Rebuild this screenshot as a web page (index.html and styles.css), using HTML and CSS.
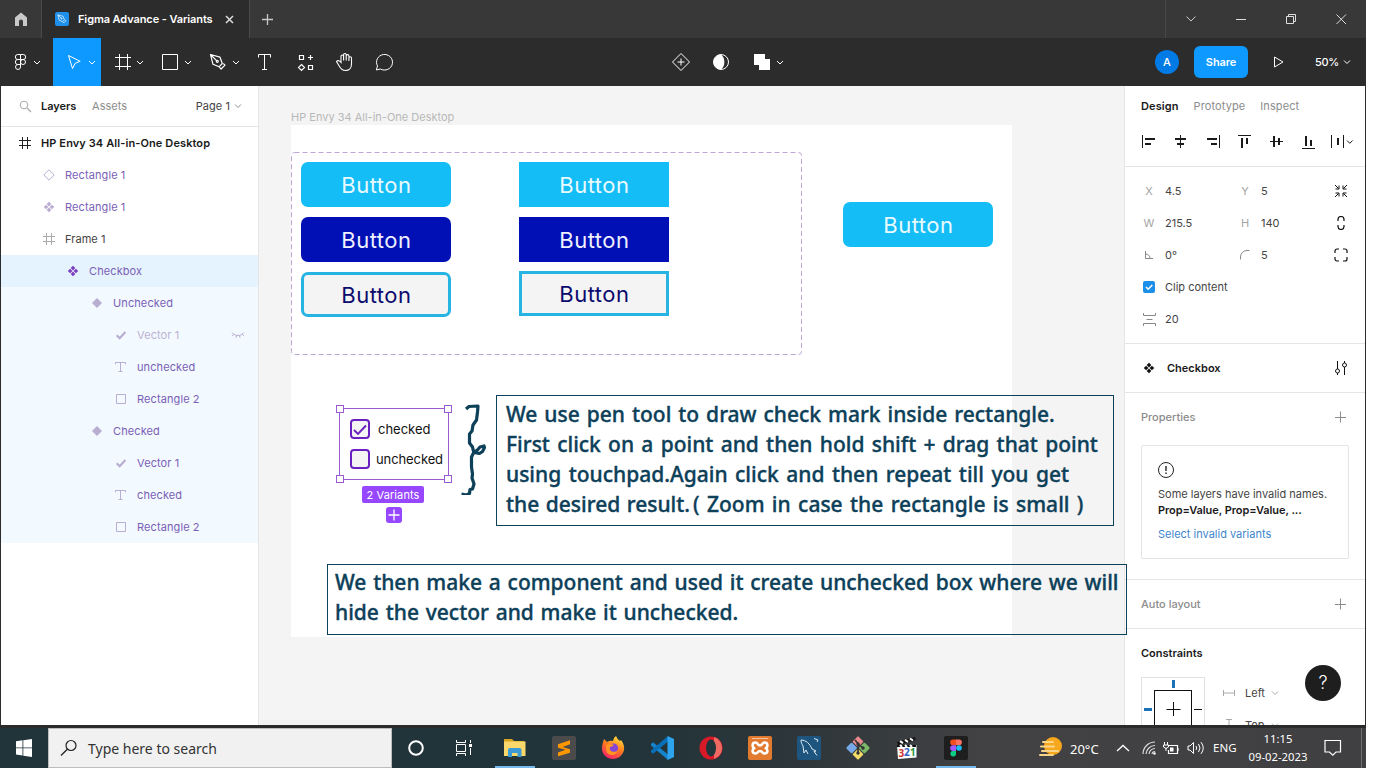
FILE: index.html
```html
<!DOCTYPE html>
<html lang="en">
<head>
<meta charset="utf-8">
<title>Figma Advance - Variants</title>
<link rel="stylesheet" href="styles.css">
</head>
<body>
<svg class="defs" width="0" height="0">
  <defs>
    <symbol id="caret" viewBox="0 0 8 8"><path d="M1 2.5l3 3 3-3" fill="none" stroke="currentColor"/></symbol>
    <symbol id="frame" viewBox="0 0 12 12"><path d="M3.5 0v12M8.500 0v12M0 3.500h12M0 8.500h12" fill="none" stroke="currentColor"/></symbol>
    <symbol id="compset" viewBox="0 0 12 12"><path d="M6 .8l2.300 2.300L6 5.400 3.700 3.100zM6 6.600l2.300 2.300L6 11.200 3.700 8.900zM3.100 3.700L5.400 6 3.100 8.300.8 6zM8.900 3.700L11.200 6 8.900 8.300 6.600 6z" fill="currentColor"/></symbol>
    <symbol id="diamond" viewBox="0 0 12 12"><path d="M6 1l5 5-5 5-5-5z" fill="currentColor"/></symbol>
    <symbol id="diamondo" viewBox="0 0 12 12"><path d="M6 .8L11.200 6 6 11.200.8 6z" fill="none" stroke="currentColor"/></symbol>
    <symbol id="check" viewBox="0 0 12 12"><path d="M1.700 6.200l3 3 5.700-6.200" fill="none" stroke="currentColor" stroke-width="2.200"/></symbol>
    <symbol id="text" viewBox="0 0 12 12"><path d="M.5 3.300V1.500h10v1.800M5.500 1.500v9M3.500 10.500h4" fill="none" stroke="currentColor"/></symbol>
    <symbol id="rect" viewBox="0 0 12 12"><path d="M1.500 1.500h9v9h-9z" fill="none" stroke="currentColor"/></symbol>
    <symbol id="plus" viewBox="0 0 12 12"><path d="M5.500 .5v11M0 6.500h11" fill="none" stroke="currentColor"/></symbol>
    <symbol id="nib" viewBox="0 0 18 18"><g fill="none" stroke="currentColor" stroke-width="1.200" stroke-linejoin="round"><path d="M1.500 1.500l9.500 2.700 2.300 6.300-3.300 3.300-6-2.500zM1.500 1.500l6.300 6.300M10.500 14.300l1.600 1.700 3.900-3.900-1.700-1.600"/><circle cx="8.300" cy="8.300" r="1"/></g></symbol>
  </defs>
</svg>

<div class="window">
  <header class="tabbar">
    <div class="home"><svg width="14" height="14"><path d="M7 .5l6 5V14H9V9.500a2 2 0 0 0-4 0V14H1V5.500z" fill="#c9c9c9"/></svg></div>
    <div class="tab">
      <span class="tab-icon"><svg width="10" height="10"><use href="#nib"/></svg></span>
      <span class="tab-title">Figma Advance - Variants</span>
      <svg class="tab-close" width="9" height="9"><path d="M1 1l7 7M8 1L1 8" stroke="#ddd" stroke-width="1.500"/></svg>
    </div>
    <div class="newtab"><svg width="11" height="11"><path d="M5.500 0v11M0 5.500h11" stroke="#c8c8c8" stroke-width="1.300"/></svg></div>
    <div class="winctl">
      <svg width="50" height="38"><path d="M20.500 16.500l4.500 4.500 4.500-4.500" fill="none" stroke="#ccc"/></svg>
      <svg width="50" height="38"><path d="M20 19.500h10" stroke="#ddd"/></svg>
      <svg width="50" height="38"><path d="M20.500 16.500h7v7h-7zM22.500 16v-1.500h7v7h-1.500" fill="none" stroke="#ddd"/></svg>
      <svg width="50" height="38"><path d="M20.500 14.500l9.500 9.500M30 14.500L20.500 24" stroke="#ddd"/></svg>
    </div>
  </header>

  <div class="toolbar">
    <svg class="menu" width="53" height="48"><g fill="none" stroke="#fff"><path d="M20.500 16.500h-2.700a2.500 2.500 0 0 0 0 5h2.700zM20.500 16.500h2.700a2.500 2.500 0 0 1 0 5h-2.700M20.500 21.500h-2.700a2.500 2.500 0 0 0 0 5h2.700zM20.500 26.500h-2.700a2.500 2.500 0 1 0 2.700 2.500z"/><circle cx="23" cy="24" r="2.500"/><path d="M34 23l3 3 3-3"/></g></svg>
    <svg class="active" width="48" height="48"><g fill="none" stroke="#fff"><path d="M15.500 17.500l4 13 2.700-5.200 5-2z" stroke-linejoin="round"/><path d="M36 23l3 3 3-3"/></g></svg>
    <svg width="48" height="48"><g fill="none" stroke="#fff"><path d="M18.500 16v16M26.500 16v16M14 19.500h16M14 28.500h16"/><path d="M36 23l3 3 3-3"/></g></svg>
    <svg width="48" height="48"><g fill="none" stroke="#fff"><path d="M13.500 16.500h15v15h-15z"/><path d="M36 23l3 3 3-3"/></g></svg>
    <svg width="48" height="48"><use href="#nib" x="12" y="15" width="18" height="18" color="#fff"/><path d="M36 23l3 3 3-3" fill="none" stroke="#fff"/></svg>
    <svg width="40" height="48"><path d="M13.500 19.500v-3h12v3M19.500 16.500v15M17 31.500h5" fill="none" stroke="#fff"/></svg>
    <svg width="40" height="48"><path d="M14.500 17.500h4v4h-4zM23.500 27.500h4v4h-4zM25.500 17v5M23 19.500h5M16.500 26.500l3 3-3 3-3-3z" fill="none" stroke="#fff" stroke-width="1.200"/></svg>
    <svg width="40" height="48"><path d="M16.500 25.500v-6.200a1.300 1.300 0 0 1 2.600 0v4.200-5.700a1.300 1.300 0 0 1 2.600 0v5.700-4.500a1.300 1.300 0 0 1 2.700 0v5-3a1.300 1.300 0 0 1 2.600 0v6c0 4-2.500 6.500-6 6.500-3 0-4.600-1.500-6-4l-3-5c1.500-1.800 3.100-.7 4.500 1z" transform="translate(-.5 -1)" fill="none" stroke="#fff" stroke-width="1.100"/></svg>
    <svg width="40" height="48"><path d="M11 31.500l1.200-4a8 7.800 0 1 1 3 3z" transform="translate(.3 .5)" fill="none" stroke="#fff" stroke-linejoin="round"/></svg>
    <div class="mid">
      <svg width="40" height="48"><path d="M20 15.500l8.500 8.500-8.500 8.500-8.500-8.500zM20 20.500v7M16.500 24h7" fill="none" stroke="#fff"/></svg>
      <svg width="40" height="48"><circle cx="20" cy="24" r="7.500" fill="none" stroke="#fff"/><path d="M20 16.500a7.500 7.500 0 0 0 0 15c4.500-3 4.500-12 0-15z" fill="#fff"/></svg>
      <svg width="48" height="48"><path d="M13 16h11v5h5v11H18v-5h-5z" fill="#fff"/><path d="M36 23l3 3 3-3" fill="none" stroke="#fff"/></svg>
    </div>
    <div class="avatar">A</div>
    <div class="share">Share</div>
    <svg class="play" width="12" height="12"><path d="M1.500 1v10L10 6z" fill="none" stroke="#fff" stroke-linejoin="round"/></svg>
    <span class="zoom">50%</span>
    <svg class="zoomcaret" width="8" height="8"><use href="#caret"/></svg>
  </div>

  <main class="work">
    <aside class="left">
      <div class="left-head">
        <svg width="13" height="13"><circle cx="5" cy="5" r="3.800" fill="none" stroke="#aaa"/><path d="M8 8l4 4" stroke="#aaa" stroke-width="1.200"/></svg>
        <b>Layers</b><span class="grey">Assets</span>
        <span class="page">Page 1</span><svg class="grey" width="8" height="8"><use href="#caret"/></svg>
      </div>
      <div class="layers">
        <div class="row d0 top"><svg><use href="#frame"/></svg>HP Envy 34 All-in-One Desktop</div>
        <div class="row d1 comp"><svg><use href="#diamondo"/></svg>Rectangle 1</div>
        <div class="row d1 comp"><svg><use href="#compset"/></svg>Rectangle 1</div>
        <div class="row d1 plain"><svg><use href="#frame"/></svg>Frame 1</div>
        <div class="row d2 comp sel"><svg><use href="#compset"/></svg>Checkbox</div>
        <div class="row d3 comp in"><svg><use href="#diamond"/></svg>Unchecked</div>
        <div class="row d4 comp in faded"><svg><use href="#check"/></svg>Vector 1<svg class="eye" viewBox="0 0 14 8"><path d="M1 1.500c3 4 9 4 12 0M2.800 3.200L1 5M11.200 3.200L13 5M5.500 4.500L5 6.800M8.500 4.500l.5 2.300" fill="none" stroke="currentColor"/></svg></div>
        <div class="row d4 comp in"><svg><use href="#text"/></svg>unchecked</div>
        <div class="row d4 comp in"><svg><use href="#rect"/></svg>Rectangle 2</div>
        <div class="row d3 comp in"><svg><use href="#diamond"/></svg>Checked</div>
        <div class="row d4 comp in"><svg><use href="#check"/></svg>Vector 1</div>
        <div class="row d4 comp in"><svg><use href="#text"/></svg>checked</div>
        <div class="row d4 comp in"><svg><use href="#rect"/></svg>Rectangle 2</div>
      </div>
    </aside>

    <section class="canvas">
      <div class="frame-label">HP Envy 34 All-in-One Desktop</div>
      <div class="artboard"></div>
      <svg class="dash" width="511" height="203"><rect x=".5" y=".5" width="510" height="202" rx="3" fill="none" stroke="#bda6d6" stroke-dasharray="5 3"/></svg>
      <div class="btn cyan round b1">Button</div>
      <div class="btn navy round b2">Button</div>
      <div class="btn line round b3">Button</div>
      <div class="btn cyan b4">Button</div>
      <div class="btn navy b5">Button</div>
      <div class="btn line b6">Button</div>
      <div class="btn cyan round b7">Button</div>

      <div class="selection">
        <i class="h tl"></i><i class="h tr"></i><i class="h bl"></i><i class="h br"></i>
        <div class="opt"><svg width="20" height="20"><rect x="1" y="1" width="18" height="18" rx="3" fill="#f4f4f4" stroke="#6a1fc0" stroke-width="2"/><path d="M4 11l4 4 8-8.500" fill="none" stroke="#6a1fc0" stroke-width="1.900"/></svg><span class="lbl-c">checked</span></div>
        <div class="opt"><svg width="20" height="20"><rect x="1" y="1" width="18" height="18" rx="3" fill="#f4f4f4" stroke="#6a1fc0" stroke-width="2"/></svg><span class="lbl-u">unchecked</span></div>
      </div>
      <div class="variants">2 Variants</div>
      <div class="addvar"><svg width="16" height="16"><path d="M8 2.500v11M2.500 8h11" stroke="#fff" stroke-width="1.300"/></svg></div>
      <svg class="brace" width="30" height="92"><path d="M8 6l3-2.500 9-.5-.5 6-1 8-3.500 5-1 6-2.500 3v9l3 4 1 4.500 3 1.500 3 .5 3-2 2-4-.5-1.500-4 1-3 3.500-3 1.500-2.500 5v10l1 7-.5 4 2 6-1.500 5-2.500.5-.5 4-3 1.500-5-.8" fill="none" stroke="#0d4059" stroke-width="3.200" stroke-linejoin="round"/></svg>
    </section>

    <aside class="right">
      <div class="rtabs"><b>Design</b><span>Prototype</span><span>Inspect</span></div>
      <div class="aligns">
        <svg width="32" height="32"><path d="M9.500 9v13"/><path d="M12 13h10M12 18h6" stroke-width="2"/></svg>
        <svg width="32" height="32"><path d="M16.500 9v13"/><path d="M11 13h11M13 18h7" stroke-width="2"/></svg>
        <svg width="32" height="32"><path d="M23.500 9v13"/><path d="M11 13h10M15 18h6" stroke-width="2"/></svg>
        <svg width="32" height="32"><path d="M10 9.500h13"/><path d="M14 12v10M19 12v6" stroke-width="2"/></svg>
        <svg width="32" height="32"><path d="M10 15.500h13"/><path d="M14 10v11M19 12v7" stroke-width="2"/></svg>
        <svg width="32" height="32"><path d="M10 22.500h13"/><path d="M14 10v10M19 14v6" stroke-width="2"/></svg>
        <svg width="32" height="32"><path d="M6.500 9v13M18.500 9v13"/><path d="M13 12v7" stroke-width="2"/><path d="M22 14.500l2.800 2.800 2.800-2.800"/></svg>
      </div>
      <div class="props">
        <div class="prow"><i>X</i><span>4.5</span><i>Y</i><span>5</span><svg width="14" height="14"><path d="M1 1l3.500 3.500M1.500 5H5V1.500M13 1L9.500 4.500M12.500 5H9V1.500M1 13l3.500-3.500M1.500 9H5v3.500M13 13L9.500 9.500M12.500 9H9v3.500" stroke="#111" fill="none"/></svg></div>
        <div class="prow"><i>W</i><span>215.5</span><i>H</i><span>140</span><svg width="14" height="14"><path d="M4 5V3.500a3 3 0 0 1 6 0V5M4 9v1.500a3 3 0 0 0 6 0V9" fill="none" stroke="#111" stroke-width="1.200"/></svg></div>
        <div class="prow"><i><svg width="10" height="10"><path d="M1.500 1v7.500H9M1.500 4c3 0 4.500 2 4.500 4.500" fill="none" stroke="#888"/></svg></i><span>0°</span><i><svg width="10" height="10"><path d="M.5 9.500V7A6.500 6.500 0 0 1 7 .5h2.500" fill="none" stroke="#888"/></svg></i><span>5</span><svg width="14" height="14"><path d="M1 5V3a2 2 0 0 1 2-2h2M9 1h2a2 2 0 0 1 2 2v2M13 9v2a2 2 0 0 1-2 2H9M5 13H3a2 2 0 0 1-2-2V9" fill="none" stroke="#111" stroke-width="1.200"/></svg></div>
        <div class="prow"><i><svg width="12" height="12"><rect width="12" height="12" rx="2" fill="#1c8fe8"/><path d="M3 6l2.200 2.200L9.300 4" fill="none" stroke="#fff" stroke-width="1.500"/></svg></i><span class="wide">Clip content</span></div>
        <div class="prow"><i><svg width="13" height="13"><path d="M.5 0v2.500h12V0M.5 13v-2.500h12V13M3.500 6.500h6" fill="none" stroke="#888"/></svg></i><span>20</span></div>
      </div>
      <div class="sec component"><svg width="12" height="12"><use href="#compset"/></svg><b>Checkbox</b><svg width="14" height="16"><path d="M3.500 1v8M3.500 13v2M10.500 1v2M10.500 7v8" stroke="#111"/><circle cx="3.500" cy="11" r="2" fill="none" stroke="#111"/><circle cx="10.500" cy="5" r="2" fill="none" stroke="#111"/></svg></div>
      <div class="sec properties">
        <div class="sec-head">Properties<svg width="12" height="12"><use href="#plus"/></svg></div>
        <div class="card">
          <svg width="16" height="16"><circle cx="8" cy="8" r="7.500" fill="none" stroke="#222"/><path d="M8 4v5M8 10.500V12" stroke="#222" stroke-width="1.400"/></svg>
          <p>Some layers have invalid names.<br><b>Prop=Value, Prop=Value, ...</b></p>
          <a>Select invalid variants</a>
        </div>
      </div>
      <div class="sec auto"><div class="sec-head">Auto layout<svg width="12" height="12"><use href="#plus"/></svg></div></div>
      <div class="constraints">
        <b>Constraints</b>
        <div class="cbody">
          <svg width="64" height="60"><rect x=".5" y=".5" width="63" height="63" fill="none" stroke="#e2e2e2"/><rect x="13.500" y="13.500" width="37" height="37" fill="none" stroke="#111"/><path d="M32.500 25v14M25.500 32.500h14M53 32.500h8" stroke="#111"/><path d="M32.500 3v8M3 32.500h8" stroke="#1a73b9" stroke-width="3"/></svg>
          <div class="csel">
            <div><svg width="12" height="8"><path d="M.5 1v6M11.500 1v6M0 4h12" stroke="#aaa"/></svg>Left<svg width="8" height="8"><use href="#caret"/></svg></div>
            <div><svg width="12" height="12"><path d="M3 .5h6M6 0v12M3 11.500h6" stroke="#aaa"/></svg>Top<svg width="8" height="8"><use href="#caret"/></svg></div>
          </div>
        </div>
      </div>
      <div class="help">?</div>
    </aside>

    <div class="note n1">
      <div class="l1">We use pen tool to draw check mark inside rectangle.</div>
      <div class="l2">First click on a point and then hold shift + drag that point</div>
      <div class="l3">using touchpad.Again click and then repeat till you get</div>
      <div class="l4">the desired result.<span class="l5">( Zoom in case the rectangle is small )</span></div>
    </div>
    <div class="note n2">
      <div>We then make a component and used it create unchecked box where we will</div>
      <div>hide the vector and make it unchecked.</div>
    </div>
  </main>

  <footer class="taskbar">
    <svg class="start" width="48" height="40"><path d="M16 13.200l6.500-.9v7.200H16zM23.300 12.200L32 11v8.500h-8.700zM16 20.300h6.500v7.200l-6.500-.9zM23.300 20.300H32V29l-8.700-1.300z" fill="#fff"/></svg>
    <div class="search"><svg width="18" height="18"><circle cx="11" cy="6.500" r="5" fill="none" stroke="#222" stroke-width="1.200"/><path d="M7.300 10.200L1 16.500" stroke="#222" stroke-width="1.300"/></svg><span>Type here to search</span></div>
    <svg width="48" height="40"><circle cx="24" cy="20" r="6.800" fill="none" stroke="#fff" stroke-width="2"/></svg>
    <svg width="48" height="40"><path d="M16.500 12v2.500h9V12M16.500 28v-2.500h9V28M16.500 16.500h9v7h-9zM30.500 12v3M30.500 20v7" fill="none" stroke="#fff"/><rect x="29" y="16" width="3" height="3" fill="#fff"/></svg>
    <div class="apps">
      <div class="app open"><svg width="24" height="24"><path d="M1 3h8l2 2h10v4H1z" fill="#d9a520"/><path d="M1 5.500h21.500V20H1z" fill="#fbd86b"/><path d="M5 21v-7q0-2 2-2h9.500q2 0 2 2v7h-4v-4h-5.500v4z" fill="#3c9ad6"/></svg></div>
      <div class="app"><svg width="24" height="24"><rect width="24" height="24" rx="2" fill="#4b4b4b"/><path d="M6 8.300l12-4v4L10.500 11l7.500 2.300v3.400L6 20.300v-3.800l7.500-2.700L6 11.800z" fill="#ff9800"/></svg></div>
      <div class="app"><svg width="24" height="24"><defs><linearGradient id="fx" x1=".8" y1="0" x2=".3" y2="1"><stop offset="0" stop-color="#ffe93b"/><stop offset=".5" stop-color="#ff7a1f"/><stop offset="1" stop-color="#f5206e"/></linearGradient></defs><path d="M3 3l3 3q3-2 6-1 0-3 3-5 1 3 4 5l1-1c3 4 3.500 7 3 10-1 5-5.500 9-11 9C6 23 1 18.500 1 12.500 1 9 2 6 3 3z" fill="url(#fx)"/><circle cx="12.500" cy="12" r="4.600" fill="#8245d8"/><path d="M5 9q4-2 8 0-2 2-4 2-1 3 2 4.500 3 1 6-1-2 5-7 4.500-5-1-5-6z" fill="#ff9422"/></svg></div>
      <div class="app"><svg width="24" height="24"><path d="M1 8l2-1.700L18 18.500V24L1 9.500z" fill="#1584cc"/><path d="M1 16l2 1.700L18 5.500V0L1 14.500z" fill="#0870b8"/><path d="M17.500 0L24 3v18l-6.500 3z" fill="#2fa4ee"/></svg></div>
      <div class="app"><svg width="24" height="24"><ellipse cx="12" cy="12" rx="11.500" ry="11.500" fill="#d71928"/><path d="M15 1a11.500 11.500 0 0 1 0 22z" fill="#ef6a62"/><ellipse cx="12" cy="12" rx="5" ry="8.500" fill="#22353a"/></svg></div>
      <div class="app"><svg width="24" height="24"><rect width="24" height="24" rx="2" fill="#e27a30"/><path d="M4 2.500h16" stroke="#f6c49c"/><path d="M7.500 6.500c2.500 0 2 3 4.500 3s2-3 4.500-3c3.500 0 3.500 4 1.500 5.700 2 1.800 2 5.300-1.500 5.300-2.500 0-2-2.500-4.500-2.500s-2 2.500-4.500 2.500c-3.500 0-3.500-3.500-1.500-5.300-2-1.700-2-5.700 1.500-5.700z" fill="none" stroke="#fff" stroke-width="2.600"/></svg></div>
      <div class="app"><svg width="24" height="24"><rect width="24" height="24" rx="2" fill="#1d557f"/><path d="M4 4c5 0 9 4 11 9l4 2-2 .5 3 4M4 4c0 3 1 4 2 6l1 7 2-3 2 4M17 2.500l4 1.500-1 2" fill="none" stroke="#dceaf3" stroke-width="1"/></svg></div>
      <div class="app"><svg width="24" height="24"><g transform="rotate(45 12 12)"><rect x="3.500" y="3.500" width="8" height="8" rx="1" fill="#e88b8e"/><rect x="12.500" y="3.500" width="8" height="8" rx="1" fill="#7cb968"/><rect x="3.500" y="12.500" width="8" height="8" rx="1" fill="#76a9e6"/><rect x="12.500" y="12.500" width="8" height="8" rx="1" fill="#f4dc6a"/></g><path d="M9 4l3 3.500v10M12 8l5 4" fill="none" stroke="#333" stroke-width="1.600"/><circle cx="12" cy="8" r="1.700" fill="#333"/><circle cx="17" cy="12" r="1.700" fill="#333"/><circle cx="12" cy="17" r="1.700" fill="#333"/></svg></div>
      <div class="app"><svg width="24" height="24"><path d="M2 6L20 1l.8 3L3 9z" fill="#111"/><path d="M5 5.200l3 2M10 3.800l3 2M15 2.500l3 2" stroke="#fff" stroke-width="2"/><path d="M2 9h19.500v12.500L3 23z" fill="#fff"/><path d="M2 9h19v2H2z" fill="#111"/><path d="M5 9l2 2M10 9l2 2M15 9l2 2" stroke="#fff" stroke-width="2"/><g class="clap"><text x="3.500" y="20.500" fill="#d0322c">3</text><text x="9" y="20" fill="#2b62c4">2</text><text x="15" y="19.500" fill="#2b9440">1</text></g></svg></div>
      <div class="app open"><svg width="24" height="24"><rect width="24" height="24" rx="2" fill="#1e1e1e"/><path d="M12 3.500H9a2.800 2.800 0 0 0 0 5.700h3z" fill="#f24e1e"/><path d="M12 3.500h3a2.800 2.800 0 0 1 0 5.700h-3z" fill="#ff7262"/><path d="M12 9.200H9a2.800 2.800 0 0 0 0 5.700h3z" fill="#a259ff"/><circle cx="15" cy="12" r="2.800" fill="#1abcfe"/><path d="M12 14.900H9a2.800 2.800 0 1 0 3 2.800z" fill="#0acf83"/></svg></div>
    </div>
    <svg class="weather" width="26" height="24"><circle cx="15" cy="10" r="9" fill="#f7a71c"/><path d="M5 6h10M3 10.500h13M4 15h16M2 19h13" stroke="#f9d58a" stroke-width="2" stroke-linecap="round"/></svg>
    <span class="temp">20°C</span>
    <svg class="up" width="14" height="8"><path d="M1 7l6-5.500L13 7" fill="none" stroke="#fff" stroke-width="1.300"/></svg>
    <svg class="wifi" width="14" height="14"><path d="M1 13A12 12 0 0 1 13 1M4 13a9 9 0 0 1 9-8.500M7 13a6 6 0 0 1 6-5.500M10 13a3 3 0 0 1 3-2.500" fill="none" stroke="#ddd" stroke-width="1.200"/><circle cx="12.500" cy="12.500" r="1.200" fill="#fff"/></svg>
    <svg class="bat" width="17" height="13"><path d="M5 3.500h9.500v8h-9V8M15 6v3" fill="none" stroke="#fff" stroke-width="1.200"/><path d="M7 5.500h3.500v4H7z" fill="#fff"/><path d="M1.500 0v3M4.500 0v3M.5 3h5v2L3 6.500.5 5zM3 6v3" fill="none" stroke="#fff"/></svg>
    <svg class="vol" width="18" height="14"><path d="M1 5v4h2l3.500 3.500v-11L3 5zM9 5q1.500 2 0 4M11.500 3q3 4 0 8M14 1.200q4.500 5.800 0 11.600" fill="none" stroke="#fff"/></svg>
    <span class="lang">ENG</span>
    <div class="clock"><div>11:15</div><div class="date">09-02-2023</div></div>
    <svg class="notif" width="18" height="18"><path d="M1 1.500h15.500V13H12l-3.200 3.200L5.500 13H1z" fill="none" stroke="#fff" stroke-width="1.200"/></svg>
    <div class="peek"></div>
  </footer>
</div>
</body>
</html>
```
FILE: styles.css
```css
* { box-sizing: border-box; }
body { margin: 0; background: #fff; overflow: hidden; font: 11px/16px Inter, "Liberation Sans", sans-serif; color: #444; }
svg { display: block; flex: none; }
b { font-weight: 600; color: #1a1a1a; }
.defs { position: absolute; }
.window { width: 1366px; height: 768px; display: flex; flex-direction: column; background: #2c2c2c; }

.tabbar { height: 38px; display: flex; background: #383838; flex: none; }
.home { width: 42px; display: flex; align-items: center; justify-content: center; border-right: 1px solid #4a4a4a; }
.tab { width: 207px; display: flex; align-items: center; padding-left: 13px; background: #2c2c2c; }
.tab-icon { width: 14px; height: 14px; border-radius: 2px; background: #1e90ec; color: #fff; display: flex; align-items: center; justify-content: center; }
.tab-title { margin-left: 9px; width: 147px; color: #fff; font-weight: 600; font-size: 11px; letter-spacing: -.1px; white-space: nowrap; }
.newtab { width: 36px; display: flex; align-items: center; justify-content: center; border-left: 1px solid #4a4a4a; }
.winctl { margin-left: auto; display: flex; border-left: 1px solid #484848; }

.toolbar { height: 48px; display: flex; align-items: center; flex: none; color: #fff; }
.active { background: #0d99ff; }
.mid { display: flex; margin-left: 256px; }
.avatar { margin-left: 366px; width: 24px; height: 24px; border-radius: 50%; background: #007be5; text-align: center; line-height: 24px; font-weight: 500; }
.share { margin-left: 15px; width: 54px; height: 32px; border-radius: 6px; background: #0d99ff; text-align: center; line-height: 32px; font-weight: 600; letter-spacing: -.1px; }
.play { margin-left: 25px; }
.zoom { margin-left: 30px; width: 23px; font-weight: 500; letter-spacing: -.3px; }
.zoomcaret { margin-left: 5px; }

.work { position: relative; display: flex; height: 639px; flex: none; margin: 0 1px; background: #f4f4f4; overflow: hidden; }
.left { width: 258px; background: #fff; border-right: 1px solid #e5e5e5; flex: none; letter-spacing: .05px; }
.left-head { height: 41px; display: flex; align-items: center; padding-left: 18px; border-bottom: 1px solid #e5e5e5; }
.left-head b { margin-left: 9px; width: 51px; letter-spacing: -.05px; }
.left-head .page { margin-left: auto; }
.left-head .page + svg { margin: 0 16px 0 4px; }
.grey { color: #8c8c8c; }
.row { height: 32px; display: flex; align-items: center; }
.row svg { width: 12px; height: 12px; margin-right: 10px; color: #b9add0; }
.d0 { padding-left: 18px; } .d1 { padding-left: 42px; } .d2 { padding-left: 66px; } .d3 { padding-left: 90px; } .d4 { padding-left: 114px; }
.top { font-weight: 600; color: #1a1a1a; letter-spacing: .1px; }
.top svg { color: #222; }
.comp { color: #7a5fb5; letter-spacing: .1px; }
.plain svg { color: #aaa; }
.sel { background: #e5f3ff; }
.sel svg { color: #7b3fc4; }
.in { background: #f2f9ff; }
.faded { color: #bcb2d2; }
.row .eye { width: 14px; height: 8px; margin: 0 13px 0 auto; }

.canvas { position: relative; flex: 1; }
.canvas > * { position: absolute; }
.frame-label { left: 32px; top: 23px; color: #b8b8b8; white-space: nowrap; }
.artboard { left: 32px; top: 39px; width: 721px; height: 512px; background: #fff; }
.dash { left: 32px; top: 66px; }
.btn { width: 150px; height: 45px; font-size: 22px; line-height: 46px; text-align: center; letter-spacing: .5px; }
.round { border-radius: 7px; }
.cyan { background: #14bdf5; color: #e9faff; }
.navy { background: #0010b5; color: #f0f0ff; }
.line { background: #f4f4f4; color: #0b0b6e; border: 3px solid #27b4e2; line-height: 40px; }
.b1 { left: 42.400px; top: 76.400px; } .b2 { left: 42.400px; top: 131.400px; } .b3 { left: 42.400px; top: 186.400px; }
.b4 { left: 260.400px; top: 76.400px; } .b5 { left: 260.400px; top: 131px; } .b6 { left: 260.400px; top: 185.400px; }
.b7 { left: 584.400px; top: 116.400px; }
.selection { left: 80px; top: 322px; width: 110px; height: 72px; border: 1px solid #9a5bd0; padding: 10px 0 0 10px; display: flex; flex-direction: column; gap: 10px; font-size: 13px; color: #111; }
.h { position: absolute; width: 8px; height: 8px; background: #fff; border: 1px solid #9a5bd0; }
.tl { left: -4px; top: -4px; } .tr { right: -4px; top: -4px; } .bl { left: -4px; bottom: -4px; } .br { right: -4px; bottom: -4px; }
.opt { display: flex; align-items: center; height: 20px; }
.lbl-c { margin-left: 8px; } .lbl-u { margin-left: 6px; letter-spacing: -.1px; }
.variants { left: 103px; top: 400px; width: 62px; height: 17px; border-radius: 2px; background: #9747ff; color: #fff; text-align: center; line-height: 18px; letter-spacing: .1px; }
.addvar { left: 127px; top: 421px; width: 16px; height: 16px; border-radius: 3px; background: #9747ff; }
.brace { left: 199px; top: 317px; }

.note { position: absolute; border: 1px solid #0d4059; color: #0d4059; font: 500 21px/30px "Noto Sans", "Open Sans", sans-serif; -webkit-text-stroke: .35px #0d4059; white-space: nowrap; }
.n1 { left: 495px; top: 309px; width: 618px; height: 131px; padding: 3px 0 0 9px; }
.n2 { left: 326px; top: 478px; width: 800px; height: 71px; padding: 2px 0 0 7px; word-spacing: 1.300px; }
.l1 { word-spacing: 1.500px; }
.l2 { word-spacing: 1.800px; }
.l3 { word-spacing: 2px; }
.l4 { word-spacing: 1px; }
.l5 { margin-left: 3px; word-spacing: 1.900px; }

.right { position: relative; width: 241px; background: #fff; border-left: 1px solid #e5e5e5; flex: none; overflow: hidden; }
.rtabs { height: 40px; display: flex; align-items: center; gap: 15px; padding-left: 16px; color: #8c8c8c; letter-spacing: .1px; }
.aligns { height: 41px; display: flex; padding-left: 7px; border-bottom: 1px solid #e5e5e5; fill: none; stroke: #1a1a1a; }
.aligns svg:first-child, .aligns svg:last-child { transform: translateX(1px); }
.props { padding: 8px 0; height: 177px; border-bottom: 1px solid #e5e5e5; }
.prow { height: 32px; display: grid; grid-template-columns: 16px 64px 16px 65px 14px; column-gap: 8px; align-items: center; padding-left: 16px; }
.prow i { font-style: normal; color: #a3a3a3; display: flex; justify-content: center; }
.wide { white-space: nowrap; }
.sec { border-bottom: 1px solid #e5e5e5; padding: 0 16px; }
.component { height: 49px; display: flex; align-items: center; padding: 0 17px 0 18px; color: #111; }
.component b { margin: 0 auto 0 12px; }
.properties { height: 187px; }
.sec-head { height: 48px; display: flex; align-items: center; justify-content: space-between; font-weight: 500; color: #8c8c8c; padding-right: 2px; }
.card { margin-top: 4px; height: 114px; border: 1px solid #e5e5e5; border-radius: 2px; padding: 16px; white-space: nowrap; }
.card p { margin: 8px 0; }
.card p b { letter-spacing: -.05px; }
.card a { color: #3f86cc; }
.auto { height: 49px; }
.constraints { padding: 16px 0 0 16px; }
.cbody { display: flex; margin-top: 16px; }
.csel { padding-left: 18px; }
.csel div { height: 32px; display: flex; align-items: center; }
.csel svg:first-child { margin-right: 10px; }
.csel svg:last-child { margin-left: 6px; color: #aaa; }
.help { position: absolute; left: 180px; top: 579px; width: 36px; height: 36px; border-radius: 50%; background: #1e1e1e; color: #fff; font-size: 18px; font-weight: 300; line-height: 36px; text-align: center; }

.taskbar { height: 43px; padding-top: 3px; display: flex; align-items: center; background: linear-gradient(#2b2b2b 3px, transparent 3px), linear-gradient(90deg, #20343a 0, #20343a 45%, #2d363a 58%, #424143 72%, #403f41 100%); color: #fff; font: 12px/18px "Noto Sans", "Open Sans", sans-serif; }
.search { width: 344px; height: 40px; display: flex; align-items: center; padding-left: 11px; background: #f1f1f1; border: 1px solid #bdbdbd; color: #333; font-size: 14px; }
.search span { margin-left: 10px; padding-top: 1px; }
.apps { display: flex; margin-left: 2px; }
.app { width: 49px; height: 40px; display: flex; align-items: center; justify-content: center; }
.open { background: linear-gradient(#76b9ed, #76b9ed) center bottom / 40px 2px no-repeat; }
.clap { font: bold 10px "Open Sans", sans-serif; }
.weather { margin-left: 58px; }
.temp { margin-left: 6px; width: 32px; font-size: 13px; padding-top: 1px; }
.up { margin-left: 14px; }
.wifi { margin-left: 12px; } .bat { margin-left: 7px; } .vol { margin-left: 7px; }
.lang { margin-left: 8px; width: 24px; font-size: 11.500px; }
.clock { margin-left: 11px; width: 60px; text-align: center; white-space: nowrap; font-size: 11.300px; }
.notif { margin-left: 16px; }
.peek { margin-left: auto; margin-right: 4px; width: 1px; height: 40px; background: #707072; }
```
